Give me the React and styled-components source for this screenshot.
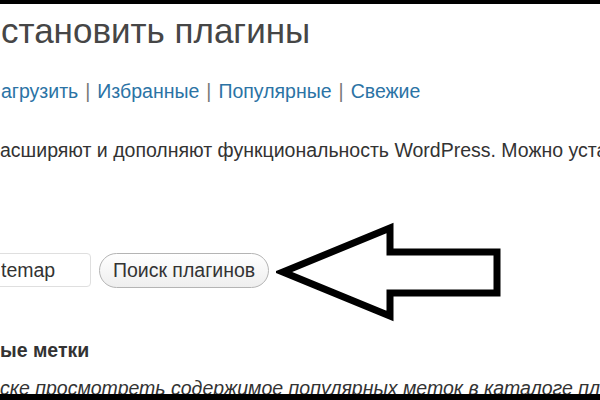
import React from 'react';
import styled, { createGlobalStyle } from 'styled-components';

const GlobalStyle = createGlobalStyle`
    html, body {
        margin: 0;
        padding: 0;
        background: #000;
    }
    body {
        font-family: "Liberation Sans", Arial, sans-serif;
    }
`;

const Screen = styled.div`
    width: 600px;
    height: 400px;
    display: flex;
    flex-direction: column;
    overflow: hidden;
    background: #000;
`;

const Bar = styled.div`
    flex: 0 0 ${props => props.size}px;
    background: #000;
`;

const Page = styled.div`
    flex: 1;
    background: #fff;
    overflow: hidden;
    padding-top: 7px;
    display: flex;
    flex-direction: column;
    color: #333;
`;

const Title = styled.h2`
    margin: 0;
    padding-left: 1px;
    font-size: 35px;
    line-height: 40px;
    font-weight: normal;
    color: #464646;
    white-space: nowrap;
`;

const SubNav = styled.ul`
    list-style: none;
    margin: 28px 0 0;
    padding: 0 0 0 1px;
    display: flex;
    font-size: 19.5px;
    line-height: 24px;
    white-space: nowrap;
    color: #666;
`;

const NavItem = styled.li`
    &:not(:last-child)::after {
        content: "|";
        color: #777;
        margin: 0 7px;
    }
`;

const NavLink = styled.a`
    color: #2b73a5;
    text-decoration: none;
`;

const Text = styled.p`
    margin: ${props => props.top}px 0 0;
    font-size: 19.5px;
    line-height: 24px;
    white-space: nowrap;
    color: #333;
    font-style: ${props => (props.italic ? 'italic' : 'normal')};
`;

const SearchRow = styled.form`
    position: relative;
    margin: 91px 0 0 -10px;
    display: flex;
    align-items: center;
    gap: 8px;
    height: 34px;
`;

const SearchInput = styled.input`
    box-sizing: border-box;
    width: 101px;
    height: 34px;
    padding: 0 0 0 10px;
    border: 1px solid #dfdfdf;
    border-radius: 4px;
    font-family: inherit;
    font-size: 19.5px;
    color: #333;
    background: #fff;
    outline: none;
`;

const SearchButton = styled.button`
    box-sizing: border-box;
    width: 170px;
    height: 35px;
    border: 1px solid #b4b4b4;
    border-radius: 18px;
    background: linear-gradient(#ffffff, #eeeeee);
    font-family: inherit;
    font-size: 19.5px;
    color: #333;
    padding: 0;
`;

const Pointer = styled.svg`
    position: absolute;
    left: 286px;
    top: -31px;
`;

const SectionTitle = styled.h4`
    margin: 51px 0 0;
    font-size: 19.5px;
    line-height: 24px;
    font-weight: bold;
    color: #333;
    white-space: nowrap;
`;

const tabs = ['агрузить', 'Избранные', 'Популярные', 'Свежие'];

function App() {
    return (
        <Screen>
            <GlobalStyle />
            <Bar size={4} />
            <Page>
                <Title>становить плагины</Title>
                <SubNav>
                    {tabs.map(tab => (
                        <NavItem key={tab}><NavLink href="#">{tab}</NavLink></NavItem>
                    ))}
                </SubNav>
                <Text top={35}>асширяют и дополняют функциональность WordPress. Можно установить плагины</Text>
                <SearchRow onSubmit={e => e.preventDefault()}>
                    <SearchInput readOnly value="temap" />
                    <SearchButton type="submit">Поиск плагинов</SearchButton>
                    {/* hand-drawn arrow pointing at the button */}
                    <Pointer width="230" height="100" viewBox="0 0 230 100">
                        <path
                            d="M7 50 L114 6 L114 30 L221 30 L221 71 L114 71 L114 94 Z"
                            fill="none"
                            stroke="#000"
                            strokeWidth="7"
                            strokeLinejoin="miter"
                            strokeMiterlimit="6"
                        />
                    </Pointer>
                </SearchRow>
                <SectionTitle>ые метки</SectionTitle>
                <Text top={14} italic>ске просмотреть содержимое популярных меток в каталоге плагинов</Text>
            </Page>
            <Bar size={6} />
        </Screen>
    );
}

export default App;
